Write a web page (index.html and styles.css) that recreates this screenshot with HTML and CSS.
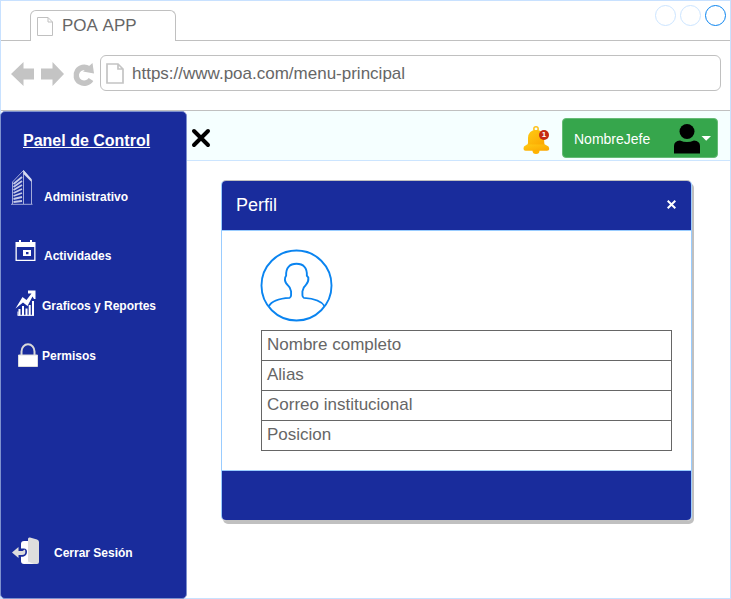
FILE: index.html
```html
<!DOCTYPE html>
<html lang="es">
<head>
<meta charset="utf-8">
<title>POA APP</title>
<link rel="stylesheet" href="styles.css">
</head>
<body>
<div class="window">
  <div class="tabbar">
    <div class="tab">
      <svg class="tab-icon" width="16" height="19" viewBox="0 0 16 19"><path d="M.5.5H11L15.500 5V18.500H.5ZM11 .5V5H15.500" fill="none" stroke="#c0c0c0"/></svg>
      <span class="tab-title">POA APP</span>
    </div>
    <div class="controls"><i class="dot"></i><i class="dot"></i><i class="dot dot-active"></i></div>
  </div>
  <div class="toolbar">
    <svg class="nav" width="84" height="26" viewBox="0 0 84 26">
      <path d="M0 13 12.500 1V7.500H23V18.500H12.500V25Z" fill="#c4c4c4"/>
      <path d="M53 13 41.500 1V7.500H30V18.500H41.500V25Z" fill="#c4c4c4"/>
      <path d="M80 18.500A8 8 0 1 1 77.500 7.500" fill="none" stroke="#c4c4c4" stroke-width="5.500"/>
      <path d="M81.500 2 83 12.500 72 10.500Z" fill="#c4c4c4"/>
    </svg>
    <div class="address">
      <svg width="18" height="21" viewBox="0 0 18 21"><path d="M1 1H12L17 6V20H1ZM12 1V6H17" fill="none" stroke="#c4c4c4" stroke-width="1.700"/></svg>
      <span class="url">https://www.poa.com/menu-principal</span>
    </div>
  </div>
  <div class="app">
    <nav class="sidebar">
      <h1 class="panel-title">Panel de Control</h1>
      <a class="item item-admin">
        <svg width="22" height="36" viewBox="0 0 22 36">
          <path d="M0 35.300H21.500M1.500 35V13L12.500 1.500 20.500 11V35M12.500 1.500V35" fill="none" stroke="#c5cae8" stroke-width=".8"/>
          <path d="M12.500 1 20.500 10V13L12.500 5Z" fill="#d5d9ef"/>
          <path d="M2.500 15 11 8M2.500 18 11 12M2.500 21 11 16M2.500 24 11 20M2.500 27 11 24M2.500 30 11 28M2.500 33 11 32" fill="none" stroke="#c5cae8" stroke-width="1.800"/>
        </svg>
        <span>Administrativo</span>
      </a>
      <a class="item item-act">
        <svg width="21" height="21" viewBox="0 0 21 21"><path d="M.5 2H4V0H6V2H15V0H17V2H20.500V21H.5ZM1.800 7V19.700H19.200V7Z" fill="#fff" fill-rule="evenodd"/><path d="M8 10H16V16H8ZM11 12V14.300H13.500V12Z" fill="#fff" fill-rule="evenodd"/></svg>
        <span>Actividades</span>
      </a>
      <a class="item item-graf">
        <svg width="21" height="26" viewBox="0 0 21 26">
          <path d="M.5 18.500 7.500 7 11.500 10 16.500 3.500 13 3.500V.5H20.500V9H19L17.500 6.500 12.500 16 8 12.500Z" fill="#fff"/>
          <path d="M4.500 19V25.500M8 16V25.500M11.500 18.500V25.500M14.700 15V25.500M18 11V25.500" stroke="#fff" stroke-width="2"/><path d="M2.500 25.300H19M3 21.500V25" stroke="#fff"/>
        </svg>
        <span>Graficos y Reportes</span>
      </a>
      <a class="item item-perm">
        <svg width="20" height="25" viewBox="0 0 20 25"><path d="M3.500 12V8.500A6.500 7.300 0 0 1 16.500 8.500V12" fill="none" stroke="#d9d9d9" stroke-width="2"/><path d="M.5 12H19.500V23.500H.5Z" fill="#fff" stroke="#ddd"/></svg>
        <span>Permisos</span>
      </a>
      <a class="item item-exit">
        <svg width="27" height="28" viewBox="0 0 27 28">
          <path d="M9 7Q9 4 12 4H18V27H12Q9 27 9 24Z" fill="#fff"/>
          <path d="M16 2Q16 0 18 .5L25 2.500Q27 3 27 5V25Q27 27 25 27H16Z" fill="#ddd"/><path d="M12 27 16 24.500 22 27Z" fill="#f8f8f8"/>
          <path d="M6 11.500H12Q15 11.500 15 15T11 19.800H6Z" fill="#192c9c"/>
          <path d="M0 15.500 6.500 10V14H10.500L12.800 12.500Q13.500 13.500 13.300 15.500 13 18 10 18H6.500V21Z" fill="#ddd"/>
        </svg>
        <span>Cerrar Sesión</span>
      </a>
    </nav>
    <main class="main">
      <header class="topbar">
        <svg class="close-menu" width="20" height="20" viewBox="0 0 20 20"><path d="M3 3 17 17M17 3 3 17" stroke="#000" stroke-width="4" stroke-linecap="round"/></svg>
        <div class="bell">
          <svg width="27" height="29" viewBox="0 0 27 29">
            <defs><linearGradient id="gold" x2="1" y2="1"><stop stop-color="#ffcb13"/><stop offset="1" stop-color="#fba500"/></linearGradient></defs>
            <circle cx="13" cy="3" r="2.200" fill="none" stroke="#ffc21a" stroke-width="1.500"/>
            <circle cx="13" cy="24.500" r="3.500" fill="#ffb300"/>
            <path d="M4 20Q5.500 17 5 12 5.500 4 13 4 21 4 21 12 21 17 22 20Z" fill="url(#gold)"/>
            <path d="M4 18.500H22L25.500 20.500Q27.500 24.500 24 24.800H2.500Q-.5 24.500 1 20.500Z" fill="url(#gold)"/>
          </svg>
          <span class="badge">1</span>
        </div>
        <div class="user">
          <span>NombreJefe</span>
          <svg width="37" height="30" viewBox="0 0 37 30"><circle cx="13" cy="7.500" r="7.500" fill="#000"/><path d="M0 29.500V22Q0 17 6 16.500 13 19.500 20 16.500 26 17 26 22V29.500Z" fill="#000"/><path d="M27.500 12H37L32.200 16.800Z" fill="#fff"/></svg>
        </div>
      </header>
      <section class="modal">
        <div class="modal-head"><h2>Perfil</h2>
          <svg width="9" height="9" viewBox="0 0 9 9"><path d="M.7.7 8.300 8.300M8.300.7.7 8.300" stroke="#fff" stroke-width="2"/></svg>
        </div>
        <div class="modal-body">
          <svg class="avatar" width="73" height="73" viewBox="0 0 74 74"><g fill="none" stroke="#0a84f0" stroke-width="1.900"><circle cx="37" cy="37" r="35.500"/><path d="M9 58C12 52 20 50 30 49.500Q31.500 49 31.500 47V43Q31 39 28 36.500 24.500 33 25.500 29L26.500 27C26 19 30 15 37 15S48 19 47.500 27L49 29Q49.500 33 46.500 36.500 43.500 39 43 43V47Q43 49 44.500 49.500C54 50 62 52 65.500 58"/></g></svg>
          <ul class="fields"><li>Nombre completo</li><li>Alias</li><li>Correo institucional</li><li>Posicion</li></ul>
        </div>
        <div class="modal-foot"></div>
      </section>
    </main>
  </div>
</div>
</body>
</html>
```
FILE: styles.css
```css
* { box-sizing: border-box; }
body { margin: 0; background: #fff; font-family: "Liberation Sans", Arial, sans-serif; color: #666; overflow: hidden; }
svg { display: block; flex: none; }
.window { width: 731px; height: 599px; border: 1px solid #c8e1ff; display: flex; flex-direction: column; }
.tabbar { height: 40px; border-bottom: 1px solid #c0c0c0; display: flex; justify-content: space-between; align-items: flex-end; padding-left: 29px; }
.tab { width: 146px; height: 31px; margin-bottom: -1px; background: #fff; border: 1px solid #c0c0c0; border-bottom: 0; border-radius: 6px 6px 0 0; display: flex; align-items: flex-start; padding: 6px 0 0 6px; gap: 9px; }
.tab-title { font-size: 17px; line-height: 19px; margin-top: -1px; font-kerning: none; }
.controls { display: flex; gap: 4px; align-self: flex-start; padding: 4px 4px 0 0; }
.dot { width: 21px; height: 21px; border: 1px solid #cce5ff; border-radius: 50%; }
.dot-active { border-color: #0a84f0; }
.toolbar { height: 70px; border-bottom: 1px solid #c0c0c0; display: flex; padding: 14px 9px 0 10px; }
.nav { margin: 6px 5px 0 0; }
.address { flex: 1; height: 36px; border: 1px solid #c0c0c0; border-radius: 6px; display: flex; align-items: center; padding-left: 5px; gap: 8px; }
.url { font-size: 17px; line-height: 20px; margin-top: 2px; }
.app { flex: 1; display: flex; margin-left: -1px; margin-bottom: -1px; }
.sidebar { width: 187px; height: 488px; background: #192c9c; border: 1px solid #7e91ce; border-radius: 5px; color: #fff; display: flex; flex-direction: column; align-items: flex-start; }
.panel-title { margin: 20px 0 0 22px; font-size: 16px; line-height: 18px; text-decoration: underline; white-space: nowrap; }
.item { display: flex; align-items: center; font-size: 12px; font-weight: bold; line-height: 14px; white-space: nowrap; }
.item-admin { margin: 19px 0 0 10px; gap: 11px; }
.item-admin span { margin-top: 20px; }
.item-act { margin: 33px 0 0 14px; gap: 8px; }
.item-act span { margin-top: 11px; }
.item-graf { margin: 27px 0 0 14px; gap: 6px; }
.item-graf span { margin-top: 6px; }
.item-perm { margin: 27px 0 0 17px; gap: 4px; }
.item-exit { margin: auto 0 33px 11px; gap: 15px; }
.item-exit span { margin-top: 3px; }
.main { flex: 1; }
.topbar { height: 50px; background: #f5ffff; border-bottom: 1px solid #cce5ff; display: flex; align-items: flex-start; padding-left: 4px; }
.close-menu { margin-top: 17px; }
.bell { position: relative; margin: 15px 12px 0 312px; }
.badge { position: absolute; left: 16px; top: 4px; width: 10px; height: 10px; border-radius: 50%; background: #c52a12; color: #fff; font-size: 8px; font-weight: bold; line-height: 10px; text-align: center; }
.user { width: 156px; height: 40px; margin-top: 7px; background: #36a64c; border: 1px solid #65bb75; border-radius: 4px; display: flex; align-items: center; justify-content: space-between; padding: 2px 6px 0 11px; color: #fff; font-size: 14px; }
.modal { width: 471px; height: 341px; margin: 19px 0 0 34px; border: 1px solid #99ccff; border-top-color: #c0c0c0; border-bottom-color: #c0c0c0; border-radius: 5px; box-shadow: 2px 3px 0 #c0c0c0; display: flex; flex-direction: column; overflow: hidden; }
.modal-head { height: 50px; background: #192c9c; border-bottom: 1px solid #99ccff; display: flex; align-items: center; justify-content: space-between; padding: 0 15px 2px 14px; color: #fff; }
.modal-head h2 { margin: 1px 0 0; font-size: 18px; font-weight: normal; }
.modal-body { flex: 1; padding: 18px 19px 0 39px; }
.avatar { margin-left: -1px; }
.fields { list-style: none; margin: 8px 0 0; padding: 0; border: 1px solid #666; border-bottom: 0; }
.fields li { height: 30px; border-bottom: 1px solid #666; padding-left: 5px; font-size: 17px; line-height: 27px; }
.modal-foot { height: 50px; background: #192c9c; border-top: 1px solid #99ccff; }
```
